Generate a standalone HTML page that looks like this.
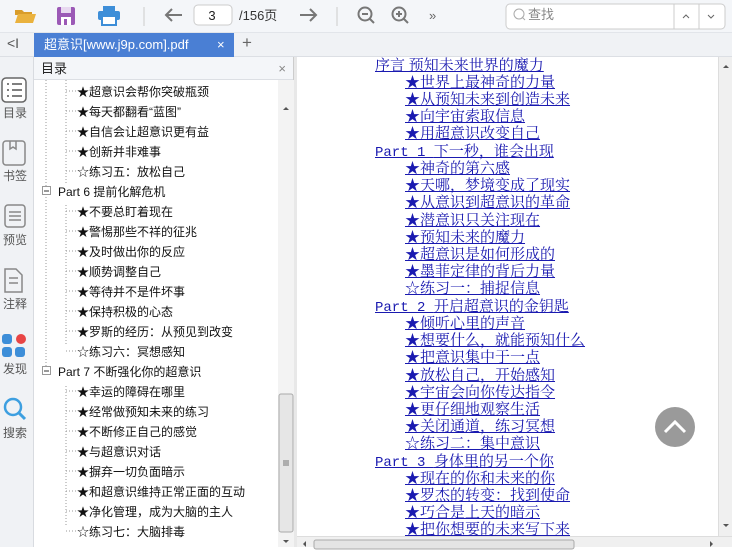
<!DOCTYPE html>
<html><head><meta charset="utf-8"><style>
*{margin:0;padding:0;box-sizing:border-box}
body{width:732px;height:547px;overflow:hidden;background:#fff;font-family:"Liberation Sans","Noto Sans CJK SC",sans-serif;position:relative}
.tb{position:absolute;left:0;top:0;width:732px;height:33px;background:#f4f6f9;border-bottom:1px solid #e2e5ea}
.tabs{position:absolute;left:0;top:33px;width:732px;height:24px;background:#f0f2f5;border-bottom:1px solid #dcdfe4}
.tab{position:absolute;left:34px;top:0;width:200px;height:24px;background:#4a7fd4;color:#fff;font-size:13px;line-height:24px;padding-left:10px}
.side{position:absolute;left:0;top:57px;width:34px;height:490px;background:#f0f2f5;border-right:1px solid #d8dbe0}
.side .lb{position:absolute;left:0;width:30px;text-align:center;font-size:12px;color:#555}
.toc{position:absolute;left:34px;top:57px;width:260px;height:490px;background:#fff;border-right:1px solid #ccc}
.toch{height:23px;background:#f4f6f9;border-bottom:1px solid #dcdfe4;font-size:13px;line-height:23px;padding-left:7px;color:#222}
.ti{position:absolute;font-size:12px;color:#111;white-space:nowrap}
.gap{position:absolute;left:294px;top:57px;width:3px;height:490px;background:#e8e8e8}
.ct{position:absolute;left:297px;top:57px;width:421px;height:479px;background:#fff;overflow:hidden}
.cl{position:absolute;font-family:"Liberation Serif","Noto Serif CJK SC",serif;font-size:15px;color:#1a1ab0;text-decoration:underline;white-space:nowrap;line-height:17px}
.cl b{font-weight:normal;font-family:"Liberation Mono",monospace;font-size:14px}
.vs{position:absolute;left:718px;top:57px;width:14px;height:479px;background:#f0f0f0;border-left:1px solid #ddd}
.hs{position:absolute;left:297px;top:536px;width:435px;height:11px;background:#f0f0f0;border-top:1px solid #ddd}
</style></head><body>
<div class="tb">
<svg width="732" height="33" style="position:absolute;left:0;top:0">
<path d="M15 10h7l2 2h8v3H15z" fill="#d99d2b"/><path d="M15 23l3-9h18l-3 9z" fill="#eab23e"/>
<rect x="57" y="7" width="18" height="18" rx="2" fill="#9b59b6"/><rect x="61" y="7" width="10" height="6" fill="#e8d9f0"/><rect x="61" y="17" width="10" height="8" fill="#fff"/><rect x="64" y="19" width="3" height="6" fill="#9b59b6"/>
<rect x="103" y="6" width="12" height="5" fill="#3d8ed8"/><rect x="98" y="11" width="22" height="9" rx="2" fill="#3d8ed8"/><rect x="102" y="16" width="14" height="9" fill="#fff" stroke="#3d8ed8" stroke-width="2"/>
<line x1="144" y1="7" x2="144" y2="26" stroke="#ccc"/>
<path d="M182 15H166M172 9l-6 6 6 6" stroke="#777" stroke-width="2" fill="none"/>
<rect x="194" y="5" width="38" height="20" rx="4" fill="#fff" stroke="#ccc"/>
<text x="212" y="20" font-size="13" fill="#222" text-anchor="middle" font-family="Liberation Sans">3</text>
<text x="239" y="20" font-size="13" fill="#333" font-family="Liberation Sans,Noto Sans CJK SC">/156页</text>
<path d="M300 15h16M310 9l6 6-6 6" stroke="#777" stroke-width="2" fill="none"/>
<line x1="337" y1="7" x2="337" y2="26" stroke="#ccc"/>
<circle cx="365" cy="14" r="6.5" stroke="#777" stroke-width="2" fill="none"/><path d="M362 14h6M370 19l4 4" stroke="#777" stroke-width="2"/>
<circle cx="399" cy="14" r="6.5" stroke="#777" stroke-width="2" fill="none"/><path d="M396 14h6M399 11v6M404 19l4 4" stroke="#777" stroke-width="2"/>
<text x="429" y="20" font-size="13" fill="#666">»</text>
<rect x="506" y="4" width="219" height="25" rx="4" fill="#fff" stroke="#ccc"/>
<circle cx="519" cy="14" r="5" stroke="#aaa" fill="none"/><path d="M522 17l3 3" stroke="#aaa"/>
<text x="528" y="19" font-size="13" fill="#888" font-family="Noto Sans CJK SC">查找</text>
<line x1="674" y1="4" x2="674" y2="29" stroke="#ccc"/><line x1="699" y1="4" x2="699" y2="29" stroke="#ccc"/>
<path d="M683 18l3-3 3 3M708 15l3 3 3-3" stroke="#666" fill="none"/>
</svg></div>
<div class="tabs">
<span style="position:absolute;left:7px;top:2px;font-size:14px;color:#555">&lt;I</span>
<div class="tab">超意识[www.j9p.com].pdf<span style="position:absolute;left:183px;top:0;font-size:13px">×</span></div>
<span style="position:absolute;left:242px;top:0px;font-size:17px;color:#666">+</span>
</div>
<div class="side">
<svg width="34" height="400" style="position:absolute;left:0;top:0">
<rect x="2" y="21" width="24" height="24" rx="4" fill="#fff" stroke="#666" stroke-width="1.5"/>
<path d="M7 27h2M12 27h10M7 33h2M12 33h10M7 39h2M12 39h10" stroke="#555" stroke-width="1.5"/>
<rect x="3" y="84" width="22" height="24" rx="3" fill="none" stroke="#888" stroke-width="1.5"/><path d="M10 84v8l3-2 3 2v-8" stroke="#888" fill="none" stroke-width="1.5"/>
<rect x="5" y="148" width="20" height="22" rx="3" fill="none" stroke="#888" stroke-width="1.5"/><path d="M9 155h12M9 159h12M9 163h12" stroke="#888" stroke-width="1.5"/>
<path d="M5 212h11l6 6v17H5z" fill="none" stroke="#888" stroke-width="1.5"/><path d="M9 221h9M9 226h9" stroke="#888" stroke-width="1.5"/>
<rect x="2" y="277" width="10" height="10" rx="3" fill="#3d8ed8"/><circle cx="21" cy="282" r="5" fill="#e84545"/>
<rect x="2" y="290" width="10" height="10" rx="3" fill="#3d8ed8"/><rect x="15" y="290" width="10" height="10" rx="3" fill="#3d8ed8"/>
<circle cx="13" cy="350" r="8" stroke="#3d9fe0" stroke-width="2.5" fill="none"/><path d="M19 356l6 6" stroke="#3d9fe0" stroke-width="3"/>
</svg>
<div class="lb" style="top:47px">目录</div><div class="lb" style="top:110px">书签</div><div class="lb" style="top:174px">预览</div><div class="lb" style="top:238px">注释</div><div class="lb" style="top:303px">发现</div><div class="lb" style="top:367px">搜索</div>
</div>
<div class="toc">
<div class="toch">目录<span style="position:absolute;right:7px;top:0;color:#888">×</span></div>
<svg width="260" height="467" style="position:absolute;left:0;top:23px">
<g stroke="#999" stroke-dasharray="1,2">
<line x1="12" y1="0" x2="12" y2="287"/><line x1="32" y1="0" x2="32" y2="104"/><line x1="32" y1="125" x2="32" y2="264"/><line x1="32" y1="306" x2="32" y2="445"/>
<line x1="32" y1="11" x2="42" y2="11"/><line x1="32" y1="31" x2="42" y2="31"/><line x1="32" y1="51" x2="42" y2="51"/><line x1="32" y1="71" x2="42" y2="71"/><line x1="32" y1="91" x2="42" y2="91"/>
<line x1="32" y1="131" x2="42" y2="131"/><line x1="32" y1="151" x2="42" y2="151"/><line x1="32" y1="171" x2="42" y2="171"/><line x1="32" y1="191" x2="42" y2="191"/><line x1="32" y1="211" x2="42" y2="211"/><line x1="32" y1="231" x2="42" y2="231"/><line x1="32" y1="251" x2="42" y2="251"/><line x1="32" y1="271" x2="42" y2="271"/>
<line x1="32" y1="311" x2="42" y2="311"/><line x1="32" y1="331" x2="42" y2="331"/><line x1="32" y1="351" x2="42" y2="351"/><line x1="32" y1="371" x2="42" y2="371"/><line x1="32" y1="391" x2="42" y2="391"/><line x1="32" y1="411" x2="42" y2="411"/><line x1="32" y1="431" x2="42" y2="431"/><line x1="32" y1="451" x2="42" y2="451"/>
</g>
<g fill="#fff" stroke="#999"><rect x="8.5" y="106.5" width="8" height="8"/><rect x="8.5" y="286.5" width="8" height="8"/></g>
<path d="M10 111h5M10 291h5" stroke="#333"/>
<rect x="244" y="0" width="16" height="467" fill="#f3f3f3"/>
<rect x="245" y="314" width="14" height="138" rx="2" fill="#e6e6e6" stroke="#aaa"/>
<path d="M249 381h6M249 383h6M249 385h6" stroke="#777"/>
<path d="M249 30l3-3 3 3z" fill="#555"/><path d="M249 460l3 3 3-3z" fill="#555"/>
</svg>
<div class="ti" style="left:43px;top:26px">★超意识会帮你突破瓶颈</div>
<div class="ti" style="left:43px;top:46px">★每天都翻看“蓝图”</div>
<div class="ti" style="left:43px;top:66px">★自信会让超意识更有益</div>
<div class="ti" style="left:43px;top:86px">★创新并非难事</div>
<div class="ti" style="left:43px;top:106px">☆练习五：放松自己</div>
<div class="ti" style="left:24px;top:126px">Part 6 提前化解危机</div>
<div class="ti" style="left:43px;top:146px">★不要总盯着现在</div>
<div class="ti" style="left:43px;top:166px">★警惕那些不祥的征兆</div>
<div class="ti" style="left:43px;top:186px">★及时做出你的反应</div>
<div class="ti" style="left:43px;top:206px">★顺势调整自己</div>
<div class="ti" style="left:43px;top:226px">★等待并不是件坏事</div>
<div class="ti" style="left:43px;top:246px">★保持积极的心态</div>
<div class="ti" style="left:43px;top:266px">★罗斯的经历：从预见到改变</div>
<div class="ti" style="left:43px;top:286px">☆练习六：冥想感知</div>
<div class="ti" style="left:24px;top:306px">Part 7 不断强化你的超意识</div>
<div class="ti" style="left:43px;top:326px">★幸运的障碍在哪里</div>
<div class="ti" style="left:43px;top:346px">★经常做预知未来的练习</div>
<div class="ti" style="left:43px;top:366px">★不断修正自己的感觉</div>
<div class="ti" style="left:43px;top:386px">★与超意识对话</div>
<div class="ti" style="left:43px;top:406px">★摒弃一切负面暗示</div>
<div class="ti" style="left:43px;top:426px">★和超意识维持正常正面的互动</div>
<div class="ti" style="left:43px;top:446px">★净化管理，成为大脑的主人</div>
<div class="ti" style="left:43px;top:466px">☆练习七：大脑排毒</div>
</div>
<div class="gap"></div>
<div class="ct">
<div class="cl" style="left:78px;top:1px">序言 预知未来世界的魔力</div>
<div class="cl" style="left:108px;top:18px">★世界上最神奇的力量</div>
<div class="cl" style="left:108px;top:35px">★从预知未来到创造未来</div>
<div class="cl" style="left:108px;top:52px">★向宇宙索取信息</div>
<div class="cl" style="left:108px;top:69px">★用超意识改变自己</div>
<div class="cl" style="left:78px;top:87px"><b>Part 1 </b>下一秒，谁会出现</div>
<div class="cl" style="left:108px;top:104px">★神奇的第六感</div>
<div class="cl" style="left:108px;top:121px">★天哪，梦境变成了现实</div>
<div class="cl" style="left:108px;top:138px">★从意识到超意识的革命</div>
<div class="cl" style="left:108px;top:156px">★潜意识只关注现在</div>
<div class="cl" style="left:108px;top:173px">★预知未来的魔力</div>
<div class="cl" style="left:108px;top:190px">★超意识是如何形成的</div>
<div class="cl" style="left:108px;top:207px">★墨菲定律的背后力量</div>
<div class="cl" style="left:108px;top:224px">☆练习一：捕捉信息</div>
<div class="cl" style="left:78px;top:242px"><b>Part 2 </b>开启超意识的金钥匙</div>
<div class="cl" style="left:108px;top:259px">★倾听心里的声音</div>
<div class="cl" style="left:108px;top:276px">★想要什么，就能预知什么</div>
<div class="cl" style="left:108px;top:293px">★把意识集中于一点</div>
<div class="cl" style="left:108px;top:311px">★放松自己，开始感知</div>
<div class="cl" style="left:108px;top:328px">★宇宙会向你传达指令</div>
<div class="cl" style="left:108px;top:345px">★更仔细地观察生活</div>
<div class="cl" style="left:108px;top:362px">★关闭通道，练习冥想</div>
<div class="cl" style="left:108px;top:379px">☆练习二：集中意识</div>
<div class="cl" style="left:78px;top:397px"><b>Part 3 </b>身体里的另一个你</div>
<div class="cl" style="left:108px;top:414px">★现在的你和未来的你</div>
<div class="cl" style="left:108px;top:431px">★罗杰的转变：找到使命</div>
<div class="cl" style="left:108px;top:448px">★巧合是上天的暗示</div>
<div class="cl" style="left:108px;top:465px">★把你想要的未来写下来</div>
<svg width="40" height="40" style="position:absolute;left:358px;top:350px"><circle cx="20" cy="20" r="20" fill="#9a9a9a"/><path d="M10 25l10-10 10 10" stroke="#fff" stroke-width="3" fill="none"/></svg>
</div>
<div class="vs"><svg width="14" height="479"><path d="M4 11l3-3 3 3z" fill="#555"/><path d="M4 467l3 3 3-3z" fill="#555"/></svg></div>
<div class="hs"><svg width="435" height="11"><rect x="17" y="1" width="260" height="9" rx="2" fill="#e4e4e4" stroke="#aaa"/><path d="M6 5l3-3v6z" fill="#555"/><path d="M413 2l3 3-3 3z" fill="#555"/></svg></div>
</body></html>
